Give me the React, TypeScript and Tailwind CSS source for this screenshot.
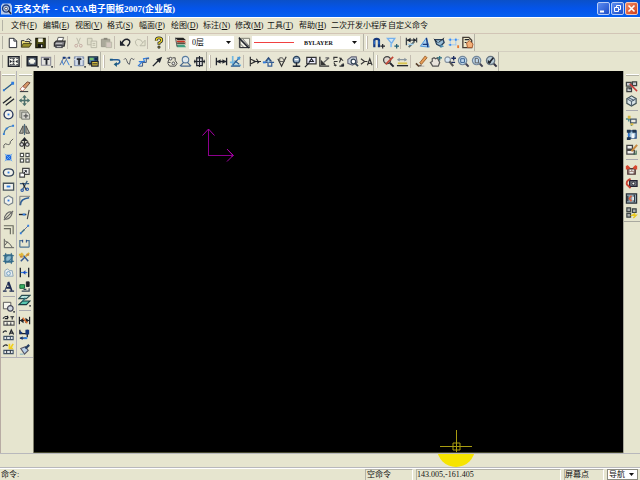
import React, { useState } from 'react';

type Shape = { d: string; stroke?: string; fill?: string; w?: number };
type Tool = { label: string; shapes: Shape[] };

const INK = '#20242c';
const NAVY = '#16387c';
const BLUE = '#2f7de0';
const SKY = '#9fd0f0';
const TEAL = '#2a8a90';
const RED = '#cc3322';
const GOLD = '#e8b820';
const GRAY = '#77786c';
const PALE = '#b9b8a6';

// Shape helpers, every icon lives in a 14x14 box
const s = (d: string, stroke = INK, w = 1): Shape => ({ d, stroke, w });
const f = (d: string, fill = INK): Shape => ({ d, fill });
const b = (d: string, fill = '#fff', stroke = INK, w = 1): Shape => ({ d, fill, stroke, w });
const ring = (cx: number, cy: number, r: number) =>
    `M${cx - r} ${cy}a${r} ${r} 0 1 0 ${r * 2} 0a${r} ${r} 0 1 0 ${-r * 2} 0z`;
const t = (label: string, ...shapes: Shape[]): Tool => ({ label, shapes });

const fileTools = [
    t('新文件', b('M3.500 2.500h5l3 3v7h-8z'), s('M8.500 2.500v3h3')),
    t('打开文件', b('M1.500 12V5h3l1 1h5v3', '#f4e680'), b('M1.500 12l2-4h9l-2.500 4z', '#98902c', '#44401c'), s('M7 4q2-2 4 0l1 1.500')),
    t('存储文件', b('M2 2.500h10v10H2z', '#4c4c14', '#1c1c0c', 1.4), f('M4.500 2.500h5v4h-5z', '#f2f2e6'), f('M4 8.500h6V12H4z', '#111'), f('M7.500 9.500h1.500V12H7.500z', '#ddd')),
];
const printTools = [
    t('绘图输出', b('M4.500 5.500l1-4h6l-1.500 4z', '#fff', '#555'), b('M1.500 7.500l2-2h9.500l-1 5.500h-10.500z', '#7c7c82', '#333', 1.4), f('M2.500 9.500h8V13H2.500z', '#44464c'), s('M3 8h7', '#c8c8c8'), s('M4 11.500h5', '#ddd')),
];
const clipTools = [
    t('图形剪切', s('M5 2l3 7M9 2L6 9', PALE), s(ring(4.5, 10.5, 1.5), '#c4a8a0'), s(ring(9.5, 10.5, 1.5), '#c4a8a0')),
    t('复制', b('M1.500 2.500h5v7h-5z', '#deddc9', PALE), b('M5.500 5.500h6v7h-6z', '#e8e7d4', PALE), s('M7 8h3M7 10h3', PALE)),
    t('粘贴', b('M1.500 3.500h9v8h-9z', '#aaa99a', '#99988a'), b('M6.500 6.500h6v6h-6z', '#d4c8c0', PALE), s('M4 3h4', '#88877a', 2)),
];
const undoTools = [
    t('取消操作', s('M3 8q2-5 6-4.500q4 1.500 2 5l-2 2.500', INK, 1.5), f('M1 4.500v6h6z')),
    t('重复操作', s('M11 8q-2-5-6-4.500q-4 1.500-2 5l2 2.500', PALE), b('M13 4.500v6H7.500z', '#e6e5d0', PALE)),
];
const helpTools = [
    t('帮助', s('M4.500 5q0-3 3-3t3 2.500q0 1.500-3 3v2', INK, 3), s('M4.500 5q0-3 3-3t3 2.500q0 1.500-3 3v1.500', '#f0d820', 1.4), b('M6.500 11h2v2h-2z', '#f0d820', INK)),
];
const layerTool = t('层控制', f('M1 2h9l3 2.500H4z', '#222'), f('M2 5h9l2 2H4z', RED), f('M2 7h9l2 2H4z', '#554'), f('M2 9.500h9l2 2.500H4z', '#40a080'), s('M1.500 2l2 10', '#555'));
const lineTool = t('线型', b('M2.500 2.500h10v10h-10z', '#f0f0e4', GRAY), s('M2 4l8 8M2 8l4 4M5 3l7 8', '#666'), s('M1.500 1.500v11h11', INK), s('M1 2l11 11', INK, 1.5));
const snapTools = [
    t('对象捕捉', s('M2.500 12V4.500Q2.500 3 5 3t2.500 1.500V12', NAVY, 2.4), s('M2.500 9V5M7.500 9V5', BLUE, 1), s('M9 11h5M11.500 8.500v5', INK, 1.3)),
    t('三视图导航', b('M1.500 2.500h8L6 8z', '#cfe4f4', '#74b0ec', 1.4), s('M5.500 8v4', '#8cc0f0', 2), s('M9 11h5M11.500 8.500v5', '#1c5c74', 1.3)),
];
const styleTools = [
    t('标注风格', s('M1.500 2v8M12.500 2v5M2 4.500h10', '#3c4448', 1.4), f('M2 4.500l4-2.500v5zM12 4.500L9 2v5z'), s('M4 12l6-6', '#58686c', 2), s('M3 9h6', SKY, 1.5)),
    t('文本风格', b('M1.500 11L8 2l3 10z', '#a8d0f0', '#4c94dc'), s('M8 2l1.500 10M4 9h6', NAVY, 1.4)),
    t('剖面图案', b('M2 4h9l1 3-4 4-4-2z', '#98bcd4', '#28405c', 1.4), s('M1 3l4 4M12 2L6 7', INK), f('M8 9l4 2-4 2z', '#4c8cb0')),
    t('点样式', s('M3.500 2v9M9.500 2v8M1 4h12M1 9.500h9', '#9cc8f4'), f('M2.500 3h2v2h-2zM8.500 3h2v2h-2zM2.500 8.500h2v2h-2z', '#3c8cf0'), f('M11 10h2v3h-2z', '#e87830')),
    t('样式控制', b('M2 1.500h6.500l3 3v8H2z', '#eee8c8', '#443c34', 1.4), s('M4 4h5M4 7h2', INK, 1.3), b('M6 7.500L9 5l4 3.500-1 4H7z', '#f4b078', '#a85c30')),
];

const sheetTools = [t('图幅设置', b('M1.500 2h11.500v10h-11.500z', '#f8f8f0', INK, 1.6), f('M5 3.500h4L7 5.500zM5 10.500h4L7 8.500zM3 5v4l2.500-2zM11.500 5v4L9 7zM6 6h2v2H6zM3 3h2v1H3zM10 3h2v1h-2zM3 10h2v1H3zM10 10h2v1h-2z'))];
const frameTools = [
    t('调入图框', b('M1.500 2h10v9.500h-10z', '#5c6878', INK, 2), f('M4.500 4h4v5.500h-4zM3 5.500h7v2.500H3z', '#f4f4e8'), f('M12 12h2v1.500h-2z')),
    t('调入标题栏', b('M1.500 2.500h10v8.500h-10z', '#e4e4e0', '#8c8c98', 1.2), s('M4 4.500h6M7 4.500v6', INK, 2), f('M12 12h2v1.500h-2z')),
];
const partTools = [
    t('生成序号', s('M1 11l4-8 3 0M5 10l4-7h3', '#58688c'), s('M3 6l2 5M8 5l3 6', BLUE), f('M4 2h3v2H4zM10 2h2v2h-2z', NAVY), f('M12 12h2v1.500h-2z')),
    t('填写明细表', b('M1.500 2h10v9.500h-10z', '#bcc8dc', '#7888a8'), s('M1 5h11M4 2v9M9 2v9', '#dce4ec'), s('M4 4.500h5M6.500 4.500v6', INK, 1.8), f('M12 12h2v1.500h-2z')),
    t('明细表风格', b('M1.500 2h10v7h-10z', '#4878a0', '#1c2c3c', 1.4), f('M3 3h4v2.500H3z', '#78c070'), b('M5 7h7v5H5z', '#d8c040', INK, 1.2), s('M6 9.500h5M2 10.500h3', INK), f('M8 3h3v3H8z', '#142c50')),
];
const pathTools = [
    t('轮廓线', s('M1 5h8q3 0 2.500 3-1 2-4 2', '#245c98', 1.6), f('M8.500 7.500V13L5 10zM1 4h3v2H1z', '#1c5c80')),
    t('波浪线', s('M1 5q2-3 3 1t3 4q1-8 3-6t2 0', '#50545c')),
    t('双折线', s('M1 12l4-4-3-1 6 0-1-3 6-1', BLUE, 1.2), s('M2 12h4V8h4V4h3', '#304c80')),
    t('箭头', s('M2 12l6-6', INK, 1.4), f('M12 2L9.500 8.500 5.500 4.500z')),
    t('齿轮', s('M2 3.500h4M5 3l-2 5h3M8 3h3v3l2 3-2 3H5l-2-3', '#444'), b(ring(6, 4, 1.5), '#eee', '#444'), b(ring(9, 9, 1.5), '#eee', '#444')),
    t('圆弧拟合', b(ring(7, 5, 3.5), '#e0e8ec', '#587ca0', 1.2), s('M1 12l4-4M13 12L9 8M2 12h10', '#48688c', 1.3)),
    t('孔轴', b('M4 3h6v8.500H4z', '#ddd', INK, 1.3), s('M1 7h12M7 1v12M2 5v4M12 5v4', INK, 1.2)),
];
const dimTools = [
    t('尺寸标注', s('M1.500 3v8M12.500 3v8M2 7h10', INK, 1.4), f('M2 7l4-2.500v5zM12 7L8 4.500v5z')),
    t('坐标标注', s('M4 1v10h9M1 8h8', '#74b8e0', 1.8), s('M4 11l8-9M6 6l5 4M2 12h10', '#28588c', 1.2), f('M9 2h3v3H9z', '#4898d8')),
];
const noteTools = [
    t('倒角标注', s('M2.500 2v10M2 4l6 3-6 3M9 4l2 3h3', '#333', 1.3), s('M6 7h6M10 9l2-2', INK, 1.3)),
    t('引出说明', s('M1 8h12M6.500 8v4h4V8', '#345c94', 1.3), f('M3 7l4-5 4 5z', '#284878'), f('M6 5h2v3H6z', SKY), f('M1 7h3v2H1z', BLUE)),
    t('粗糙度', s('M2 4l4 8 5-10', '#333', 1.2), s('M4 7h5L7 3H4z', '#555')),
    t('基准代号', b(ring(7, 5, 3.5), '#8ca4bc', '#28405c', 1.4), s('M7 8v4M3 12h8', INK, 1.6), s('M5 5h4', '#fff', 1.4)),
    t('形位公差', b('M3 2.500h10v7H3z', '#eef', '#333', 1.3), s('M6 7l2-3 2 3zM1 13l5-5', INK, 1.3)),
    t('焊接符号', s('M2 2v10h10', '#333', 1.4), f('M3 11V5l6 6z', '#333'), s('M6 8l6-5M8 3h4', '#666', 1.3)),
    t('剖切符号', s('M2 5V2.500h4M12 9v3H8M2 8l2 4M8 3l4 3', '#333', 1.2), s('M2 7h4M8 8l2-5M2 11h3', '#333', 1.2), f('M10 10h3v2h-3z')),
    t('局部放大', b('M2 9V5l4-3h5l1 6-5 3z', '#cbd4df', '#667', 1.2), b(ring(8, 7, 2.5), '#fff', '#345', 1.3), s('M10 9l3 3', '#345', 1.8)),
    t('中心孔标注', s('M1 4l4 3-4 3M5 7h3M8 11l2.500-7L13 11M9 9h3', '#333', 1.2)),
];
const queryTools = [
    t('查询', b(ring(5.5, 5.5, 3.800), '#e0d8d0', '#444', 1.4), s('M8.500 8.500l4 4', INK, 2.2), s('M12 2L4 10', '#c04838', 1.8)),
    t('标注编辑', s('M2 5h9', '#88949c', 1.3), f('M1 5l3-2v4zM12 5L9 3v4z', '#88949c'), f('M2 8h10v2H2z', '#d8c450'), s('M1 11.500h12', INK, 1.4)),
];
const viewTools = [
    t('重画', b('M5 8.500L11 1l2 2-6 7z', '#e8a058', '#9c602c'), s('M1 9l3 3 3-1', '#58402c', 1.8), s('M4 12h6', '#aaa')),
    t('动态平移', b('M4 12L1.500 8l2-1V4l2-1 1.500 1 2-1 1 2 1.500 3-1.500 4z', '#e8e4dc', '#555', 1.3), s('M9 3h5M11.500 1v5', '#286c80', 1.3)),
    t('动态缩放', b(ring(5, 5, 3), '#d8e8f4', '#8894a0', 1.2), s('M7 7l4 5', '#555', 2.2), s('M9 3.500h5M11.500 1v5M9 8h4', '#1c2c60', 1.4)),
    t('显示窗口', b(ring(6, 6, 4.5), '#c0d8ec', '#74889c', 1.3), s('M4 4h4v4H4z', '#345c8c'), s('M9.500 9.500l3 3', '#445', 2.2)),
    t('显示全部', b(ring(6, 6, 4.5), '#c0d8ec', '#74889c', 1.3), s('M4.500 3.500h2.500l1 1v4H4.500z', '#555'), s('M9.500 9.500l3 3', '#445', 2.2)),
    t('显示回溯', b(ring(6, 6, 4.5), '#b8ccd8', '#667480', 1.3), s('M4 9l5-6', INK, 1.8), f('M3 5l4 4H3z'), s('M9.500 9.500l3 3', '#334', 2.2)),
];

const drawTools = [
    t('直线', s('M2 11l9-7', '#285c88', 1.4), f('M1 10h2v2H1zM10 2h3v3h-3z', BLUE)),
    t('平行线', s('M1 10l9-7M4 12l9-7', INK, 1.4)),
    t('圆', b(ring(7, 7, 4.8), '#f2f2ec', '#28375c', 1.4), f('M6 6h2v2H6z', BLUE)),
    t('圆弧', s('M2 12Q3 4 12 3', '#4078a0', 1.2), f('M1 11h2v2H1zM11 2h2v2h-2zM4 5h2v2H4z', BLUE)),
    t('样条', s('M2 12V9q1-3 4-1 3 1 3-3l3-3', '#555')),
    t('点', f('M4 4h6v6H4z', '#2068e0'), s('M3 3l8 8M11 3l-8 8', '#6aaef2')),
    t('椭圆', b('M1.500 7q0-4 5.500-4t5.500 4-5.500 4-5.500-4z', '#f2f2ec', '#38475c', 1.4), f('M6 6h2v2H6z', BLUE)),
    t('矩形', b('M1.500 3.500h11v7.500h-11z', '#f2f2ec', '#48545c', 1.4), f('M5 6h4v2H5z', BLUE)),
    t('正多边形', b('M7 2l4.500 2.500v5L7 12 2.500 9.500v-5z', '#f2f2ec', '#78848c', 1.2), f('M6 6h2v2H6z', BLUE)),
    t('中心线', s('M2 12L12 2M3 8q4-7 8-4-1 6-6 7-3 0-2-3z', '#666', 1.2)),
    t('等距线', s('M2 3h10v9M2 6h7v6', '#66675c', 1.2)),
    t('公式曲线', s('M2.500 2v9.500H13M3 4l5 3 3 4M3 9l3-4', '#555')),
    t('剖面线', b('M3 3h8v8H3z', '#8cbad0', '#2d6484'), s('M1 4h12M1 10h12M4 1v12M10 1v12M3 7l4-4M6 11l5-5', '#2d6484')),
    t('填充', b('M3 11V5l3-2 2 2h3l1 6z', '#e8eef2', '#8aa4b4'), s(ring(7, 8, 2), '#6a9cbc')),
    t('文字', s('M7 2L3 11.500M6.500 2.500L8 9', '#1a2850'), s('M7 2l3.500 9.500M4.500 8.500h5', '#1a2850', 1.8), s('M1 12h4M8 12h5', '#1a2850', 1.4)),
];
const blockTools = [
    t('块生成', b('M1.500 2.500h8v7h-8z', '#f6f6ee', '#555'), b(ring(9, 9, 3), '#d0d8e0', '#445', 1.2), f('M12 12h2v1.500h-2z')),
    t('块打散', s('M1 5q3-4 6-1M6 2v3H3M9 3h4M11 3v3', INK, 1.2), b('M2 8h11v4H2z', '#f2f2e6', '#555', 1.2), s('M5.500 9v3M9.500 9v3', INK)),
    t('块属性', s('M1 5q2-3 4-1M8 7l2-5 2.500 5M8.500 5.500h4', INK, 1.3), b('M2 9h10v3.500H2z', '#e4e8ec', '#456', 1.2), s('M5 9v3M9 9v3', '#345')),
    t('块消隐', s('M1 5q3-3 5-1', INK, 1.3), s('M9 7l3-5M8 2v5h4', '#f0d020', 1.8), b('M2 9h10v3.500H2z', '#e4e8ec', '#456', 1.2), s('M5 9v3M9 9v3', INK)),
];
const editTools = [
    t('删除', b('M5 7l5-5 3 1-5 6z', '#d89868', '#704838'), b('M2 10l3-3 3 2-3 3z', '#fff', '#b87060'), s('M2 12.500h9', INK)),
    t('平移', s('M7 2v10M2 7h10', '#4c706c', 1.6), f('M7 1l2.500 3h-5zM7 13l2.500-3h-5zM1 7l3-2.500v5zM13 7l-3-2.500v5z', '#4c706c')),
    t('复制选择到', b('M2 2.500h7l2 2v6H2z', '#c4c4b8', '#8c8c80'), b('M4 4.500h6l2.500 2V12H4z', '#d8d8d0', '#70746c'), s('M6 8.500h5M8.500 6v5', '#555', 1.3)),
    t('镜像', s('M7 1v12', '#506c7c', 1.3), b('M1.500 11l4-8v8zM12.500 11l-4-8v8z', '#b4b4a8', '#444')),
    t('旋转', s('M7 1v12M3 5q4-4 8 0', '#333', 1.3), b(ring(4, 8, 2), '#ddd', '#333', 1.2), b(ring(10, 8, 2), '#ddd', '#333', 1.2), f('M7 0l3 4H4z')),
    t('阵列', b('M2.500 2.500h3.500v3.500H2.500zM8.500 2.500H12v3.500H8.500zM2.500 8.500h3.500V12H2.500zM8.500 8.500H12V12H8.500z', '#fff', '#4c504c', 1.2)),
    t('比例缩放', b('M5 2.500h7v6.500H5z', '#eee', '#444', 1.2), b('M2 7.500h5V12H2z', '#fff', '#444', 1.2), s('M6 8l3-3M7 5h2v2', INK)),
    t('裁剪', s('M2 4h10M10 1L5 10', '#3a5e80', 1.4), s('M5 3l4 8', INK, 1.3), s(ring(4.5, 11, 1.3), '#2858a8', 1.2), s(ring(10, 10, 1.3), '#2858a8', 1.2)),
    t('过渡', s('M2.500 12Q2.500 5 12 4', '#285c98', 1.8), s('M2 12V2.500h11', '#777')),
    t('齐边', s('M1 7h8', INK, 1.5), s('M12 2l-2 10', '#444', 1.2), f('M5 6h3v2H5z', BLUE)),
    t('拉伸', s('M3 11l8-8', '#668'), f('M2 10h2v2H2zM10 2h2v2h-2z', BLUE), s('M4 10l3-3', '#386c80', 1.5)),
    t('打断', s('M2 11V4h3M12 11V4H9M2 11h10', '#4c7494', 1.3), s('M5 3v3M9 3v3', NAVY)),
    t('局部放大图', s('M1 4h5M4 2v5M8 6l4-4', '#e0b838', 2), s('M3 11l4-4M6 5l5 6', '#38588c', 1.6), f('M9 3h3v2H9zM2 5h3v2H2z', '#c88840')),
    t('标注修改', s('M2.500 2v10M11.500 2v10', INK, 1.4), s('M3 7h7', BLUE, 1.3), f('M5 7l3-2.500v5z', '#1848c0')),
    t('格式刷', b('M9 2h3v5H9z', '#222', INK), b('M2 5h5v4H2z', '#38b060', '#186038'), s('M4 12h8V9M6 10h3', '#345', 1.3)),
    t('改变层', b('M4 1.500h9L9 5H1z', '#b8e4dc', '#284c50', 1.2), b('M5 7.500h8L9 11.500H1z', '#58c8b0', '#183c40', 1.2), s('M8 4L5 8', '#287078', 1.5), f('M12 12h2v1.500h-2z')),
];
const dimEditTools = [
    t('尺寸驱动', s('M1.500 3v8M12.500 3v8M2 7h10', INK, 1.3), f('M2 7l4-3v6zM12 7L8 4v6z'), s('M5 4l5 6', '#e07030', 1.5)),
    t('标注编辑', s('M2 2v4h8M10 2v8M2 11h7', INK, 1.4), f('M2 11l3-2v4zM8 2h4v5H8zM2 3l3 2-3 2z', NAVY), f('M6 10h4v2H6z', BLUE)),
    t('特性匹配', b('M3 6l5-2 3 4-4 4z', '#b8d0e8', '#556', 1.2), s('M8 6l4-4', '#223c60', 2.4), s('M2 12h4', '#7ab')),
];

const libTools = [
    t('提取图符', b('M1.500 2.500h5v4h-5zM2 8.500h5v4H2zM8 2h4.500v4H8z', '#c8ccd0', '#3c4040', 1.3), s('M5 4l8 8', '#c83838', 1.6), s('M4 9.500h3', INK)),
    t('定义图符', b('M2 5l5-3 5 3v5l-5 3-5-3z', '#d8e4e8', '#445458', 1.3), s('M2 5l5 3 5-3M7 8v5M4 4l6 3', '#567', 1.2)),
];
const lib2Tools = [
    t('构件库', s('M1 5.500h5M4 3v5M7 9v4', '#508c90', 1.6), b('M6 5.500h6v4H6z', '#e8e8e0', '#456', 1.3), f('M3 2h3v3H3zM6 10h3v2H6z', '#d8b840')),
    t('技术要求库', b('M4 3h8v8H4z', '#a0c4dc', '#284c80', 1.4), f('M2 2h4v3H2zM8 2h4v3H8zM2 10h4v3H2z', '#1c3450'), f('M7 6h3v5H7z', '#f4f8fc'), f('M3 6h2v3H3z', BLUE)),
    t('图库管理', b('M2 2.500h6v4H2zM2 8h8v4H2z', '#eee', '#444', 1.4), s('M7 9l6-7', '#c88a40', 2.2), s('M9 12h3V8', '#406c58', 1.3)),
];
const lib3Tools = [
    t('驱动图符', b('M3 6h8v6H3z', '#a89088', '#503838', 1.4), s('M2 3l3 3M12 3L9 6M2 3v4M12 3v4', '#d84830', 2.2), s('M5 8h1.500M8 8h1.500M5 10.500h4', '#eee', 1.4)),
    t('图库转换', b('M5 4h8v6H5z', '#70747c', '#223', 1.3), s('M6 2Q1 4 2 8l4 4', '#c84030', 2), b(ring(9, 7, 1.5))),
    t('外部对象', b('M1.500 2h11v10h-11z', '#90a4b0', '#283038', 1.3), s('M7 4L4.500 7 7 10', '#d86040', 1.8), s('M10 3v8M3 4v6', '#283038', 1.3), f('M8 5h1.500v4H8z', '#fff')),
    t('电气图库', b('M2 2h4v4H2zM8 3h4v4H8zM2 8h4v4H2z', '#a8acac', '#3c4444', 1.3), s('M11 8l-3 2h4l-3 3', '#e8c820', 1.6)),
];

const menus: [string, string][] = [
    ['文件', 'F'], ['编辑', 'E'], ['视图', 'V'], ['格式', 'S'], ['幅面', 'P'],
    ['绘图', 'D'], ['标注', 'N'], ['修改', 'M'], ['工具', 'T'], ['帮助', 'H'],
];

const Icon = ({ shapes }: { shapes: Shape[] }) => (
    <svg viewBox="0 0 14 14" className="w-[13px] h-[13px] block" aria-hidden="true">
        {shapes.map((p, i) => (
            <path key={i} d={p.d} fill={p.fill ?? 'none'} stroke={p.stroke ?? 'none'} strokeWidth={p.w} />
        ))}
    </svg>
);

const ToolButton = ({ tool }: { tool: Tool }) => (
    <button type="button" aria-label={tool.label} title={tool.label} className="flex w-[14px] min-h-0 shrink-0 items-center justify-center hover:bg-white/60">
        <Icon shapes={tool.shapes} />
    </button>
);

const Row = ({ tools }: { tools: Tool[] }) => (
    <div className="flex shrink-0">{tools.map(tool => <ToolButton key={tool.label} tool={tool} />)}</div>
);

const Sep = () => <div className="h-[13px] w-px ml-[1px] mr-[3px] bg-[#c4bdb0] shrink-0" />;

// Right edge of one toolbar followed by the grip of the next
const Grip = () => (
    <div className="flex w-2 shrink-0 self-stretch items-center gap-[2px]">
        <div className="w-px self-stretch bg-[#b4b3a6]" />
        <div className="h-[13px] w-[2px] border-l border-white bg-[#c4bdb0]" />
    </div>
);

const HSep = () => <div className="w-3 h-px my-[2px] mx-auto bg-[#a9a9ae] shrink-0" />;
const HGrip = () => <div className="w-[13px] h-[2px] mx-auto mt-[3px] mb-[3px] border-t border-white bg-[#b4b3a6] shrink-0" />;

const Column = ({ tools, height }: { tools: Tool[]; height: string }) => (
    <div className={`grid auto-rows-fr shrink-0 justify-start ${height}`}>
        {tools.map(tool => <ToolButton key={tool.label} tool={tool} />)}
    </div>
);

const Picker = ({ label, className, children }: { label: string; className: string; children: React.ReactNode }) => (
    <div className={`relative flex shrink-0 items-center bg-white ${className}`}>
        {children}
        <svg viewBox="0 0 5 3" className="pointer-events-none absolute right-[3px] w-[5px] h-[3px]" aria-label={label}>
            <path d="M0 0h5L2.500 3z" fill="#111" />
        </svg>
    </div>
);

const App: React.FC = () => {
    const [layer, setLayer] = useState('0层');
    const [lineType, setLineType] = useState('BYLAYER');
    const [snap, setSnap] = useState('导航');

    return (
        <div className="flex h-screen flex-col overflow-hidden bg-[#e6e5cf] text-[8px] leading-[10px] text-[#111] font-['Liberation_Serif','Noto_Sans_CJK_SC',serif]">
            <header className="flex h-[17px] shrink-0 items-center justify-between bg-linear-to-b from-[#0b50c8] via-[#0454ea] to-[#0660f0] pl-[1px] pr-[2px]">
                <h1 className="flex items-center gap-[2px] text-[9px] leading-[12px] font-bold text-white whitespace-pre">
                    <svg viewBox="0 0 14 14" className="w-[11px] h-[12px]" aria-hidden="true">
                        <path d="M2 0h10l2 3v11H0V3z" fill="#b8ccec" />
                        <path d={ring(6.5, 6.5, 4.5)} fill="none" stroke="#1c3c80" strokeWidth="1.8" />
                        <path d={ring(6.5, 6.5, 1.8)} fill="#fff" stroke="#334" />
                        <path d="M9 9l4 4" stroke="#223" strokeWidth="2" />
                    </svg>
                    无名文件  -  CAXA电子图板2007(企业版)
                </h1>
                <div className="flex gap-px">
                    <button type="button" aria-label="最小化" className="size-[13px] rounded-[2px] border border-[#b8cdf6] bg-linear-to-br from-[#5c8cf0] to-[#1c4cc8]">
                        <svg viewBox="0 0 11 11"><path d="M2 7.500h4v2H2z" fill="#fff" /></svg>
                    </button>
                    <button type="button" aria-label="还原" className="size-[13px] rounded-[2px] border border-[#b8cdf6] bg-linear-to-br from-[#5c8cf0] to-[#1c4cc8]">
                        <svg viewBox="0 0 11 11"><path d="M4.500 4V2.500h4v4H7M2.500 4.500h4v4h-4z" fill="none" stroke="#fff" /></svg>
                    </button>
                    <button type="button" aria-label="关闭" className="size-[13px] rounded-[2px] border border-[#f4c8b8] bg-linear-to-br from-[#f08860] to-[#d03c18]">
                        <svg viewBox="0 0 11 11"><path d="M2.500 2.500l6 6M8.500 2.500l-6 6" stroke="#fff" strokeWidth="1.6" /></svg>
                    </button>
                </div>
            </header>

            <nav className="flex h-[17px] shrink-0 items-center border-t border-b border-t-white border-b-[#d2c5b6] pl-[2px]">
                <div className="mr-[8px] h-[11px] w-px bg-[#b4b3a6]" />
                {menus.map(([name, key]) => (
                    <button type="button" key={name} className="w-8 shrink-0 text-left whitespace-nowrap">
                        {name}(<u>{key}</u>)
                    </button>
                ))}
                <button type="button" className="shrink-0 whitespace-nowrap">二次开发小程序</button>
                <button type="button" className="ml-px shrink-0 whitespace-nowrap">自定义命令</button>
            </nav>

            <div className="flex h-[18px] shrink-0 border-b border-[#d4cfc0]">
                <div className="flex items-center border-r border-[#b4b3a6] bg-[#e8e6d4] pl-[2px]">
                    <div className="mr-[2px] h-[13px] w-px bg-[#b4b3a6]" />
                    <Row tools={fileTools} />
                    <Sep />
                    <Row tools={printTools} />
                    <Sep />
                    <Row tools={clipTools} />
                    <Sep />
                    <Row tools={undoTools} />
                    <Sep />
                    <Row tools={helpTools} />
                    <Grip />
                    <ToolButton tool={layerTool} />
                    <Picker label="层" className="ml-[2px] h-[13px] w-[45px]">
                        <select aria-label="当前层" value={layer} onChange={e => setLayer(e.target.value)} className="w-full appearance-none pl-[3px] outline-none">
                            <option>0层</option>
                            <option>中心线层</option>
                            <option>虚线层</option>
                        </select>
                    </Picker>
                    <div className="w-[3px]" />
                    <ToolButton tool={lineTool} />
                    <Picker label="线型" className="ml-[1px] mr-[3px] h-[13px] w-[108px]">
                        <div className="ml-[2px] h-px w-10 shrink-0 bg-[#f04040]" />
                        <select aria-label="当前线型" value={lineType} onChange={e => setLineType(e.target.value)} className="ml-[10px] w-full appearance-none text-[6px] font-bold outline-none">
                            <option>BYLAYER</option>
                            <option>BYBLOCK</option>
                        </select>
                    </Picker>
                    <Grip />
                    <Row tools={snapTools} />
                    <Sep />
                    <Row tools={styleTools} />
                </div>
            </div>

            <div className="flex h-[19px] shrink-0">
                <div className="flex items-center border-r border-[#b4b3a6] bg-[#e8e6d4] pl-[2px]">
                    <div className="mr-[3px] h-[13px] w-px bg-[#b4b3a6]" />
                    <Row tools={sheetTools} />
                    <Sep />
                    <Row tools={frameTools} />
                    <Sep />
                    <Row tools={partTools} />
                    <Grip />
                    <Row tools={pathTools} />
                    <Grip />
                    <Row tools={dimTools} />
                    <Sep />
                    <Row tools={noteTools} />
                    <Grip />
                    <Row tools={queryTools} />
                    <Sep />
                    <Row tools={viewTools} />
                </div>
            </div>

            <main className="flex min-h-0 flex-1">
                <aside className="flex w-[34px] shrink-0 items-start border-l border-l-[#b8aca4] border-r border-r-[#80806c]">
                    <div className="flex w-[15px] flex-col border-b border-[#b4b3b8] pb-px">
                        <HGrip />
                        <Column tools={drawTools} height="h-[215px]" />
                        <HSep />
                        <Column tools={blockTools} height="h-[57px]" />
                    </div>
                    <div className="flex w-[17px] flex-col border-b border-l border-[#b4b3b8]">
                        <HGrip />
                        <Column tools={editTools} height="h-[229px]" />
                        <HSep />
                        <Column tools={dimEditTools} height="h-[44px]" />
                    </div>
                </aside>

                <section aria-label="绘图区" className="relative min-w-0 flex-1 overflow-hidden border-b border-[#44462c] bg-black">
                    {/* user coordinate axes */}
                    <svg viewBox="0 0 36 30" className="absolute left-[166px] top-[56px] h-[30px] w-9" aria-hidden="true">
                        <path d="M8.500 28V2M8 28.500h25" fill="none" stroke="#8c008c" />
                        <path d="M2.500 8.500l6-6.500 6 6.500M27 22l6 6.500-6 6" fill="none" stroke="#a800a8" />
                        <path d="M27 22l6.500 6.500" fill="none" stroke="#a800a8" />
                    </svg>
                    <svg viewBox="0 0 8 8" className="absolute left-[192px] top-[84px] size-2" aria-hidden="true">
                        <path d="M1 6.500l6-6" fill="none" stroke="#a800a8" />
                    </svg>
                    <svg viewBox="0 0 32 22" className="absolute bottom-0 left-[406px] h-[22px] w-8" aria-hidden="true">
                        <path d="M0 16.500h32M16.500 0v22M13 13h7v7h-7z" fill="none" stroke="#a89c10" />
                    </svg>
                </section>

                <aside className="flex w-[17px] shrink-0 flex-col border-l border-l-[#a8a89c]">
                    <HGrip />
                    <Column tools={libTools} height="h-[29px]" />
                    <HSep />
                    <Column tools={lib2Tools} height="h-[44px]" />
                    <HSep />
                    <Column tools={lib3Tools} height="h-[58px]" />
                    <div className="mt-[1px] h-px bg-[#a9a9a0]" />
                </aside>
            </main>

            <div className="relative h-[15px] shrink-0 overflow-hidden border-t border-b border-t-[#b8b8bc] border-b-[#b8b8bc]">
                <svg viewBox="0 0 38 14" className="absolute left-[437px] top-0 h-[14px] w-[38px]" aria-hidden="true">
                    <path d={ring(19, -6, 19)} fill="#f6e400" />
                </svg>
            </div>

            <footer className="flex h-[12px] shrink-0 items-center gap-[3px] border-t border-white pl-[1px] pr-[2px]">
                <label htmlFor="command" className="shrink-0">命令:</label>
                <input id="command" type="text" className="min-w-0 flex-1 bg-transparent outline-none" />
                <span className="w-[48px] shrink-0 border-l border-t border-[#b4b3a6] border-r border-r-white pl-[1px]">空命令</span>
                <span className="w-[145px] shrink-0 border-l border-t border-[#b4b3a6] border-r border-r-white">143.005,-161.405</span>
                <span className="w-[40px] shrink-0 border-l border-t border-[#b4b3a6] border-r border-r-white">屏幕点</span>
                <Picker label="捕捉" className="h-[11px] w-[31px] border border-[#8c8c80]">
                    <select aria-label="捕捉方式" value={snap} onChange={e => setSnap(e.target.value)} className="w-full appearance-none pl-px outline-none">
                        <option>导航</option>
                        <option>自由</option>
                        <option>智能</option>
                        <option>栅格</option>
                    </select>
                </Picker>
            </footer>
        </div>
    );
};

export default App;
